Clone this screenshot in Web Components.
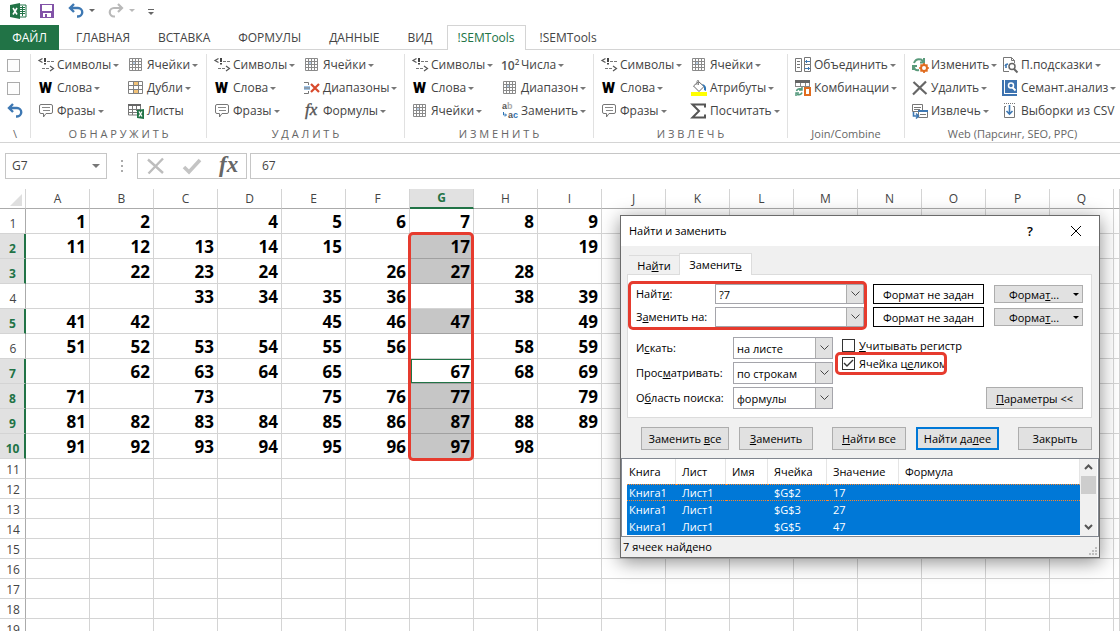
<!DOCTYPE html>
<html lang="ru">
<head>
<meta charset="utf-8">
<title>Книга1 - Excel</title>
<style>
  body {
    margin: 0;
    height: 100vh;
    overflow: hidden;
    background: #fff;
    color: #444;
    font: 12px/16px "Open Sans", "Noto Sans", sans-serif;
  }
</style>
</head>
<body>
<excel-app></excel-app>

<script>
const ICONS = {
  excel: `<path d="M9 2h7v12H9z" fill="#fff" stroke="#217346"/><path d="M10 4.500h5M10 6.500h5M10 8.500h5M10 10.500h5M12.500 3v10" stroke="#217346"/><path d="M0 2 10 0v16L0 14z" fill="#217346"/><path d="m3 5 4 6.500M7 5l-4 6.500" stroke="#fff" stroke-width="1.600"/>`,
  save: `<path d="M1 1h14v14H1z" fill="#8253a8"/><path d="M3 2h10v6H3z" fill="#fff"/><path d="M4 10h8v4H4z" fill="#fff"/><path d="M6 11h2v3H6z" fill="#8253a8"/>`,
  undo: `<path d="M6 1 2 5l4 4M2.500 5H10a4 4 0 0 1 0 8.500H9" stroke="#3e78b3" stroke-width="2.400"/>`,
  redo: `<path d="m10 1 4 4-4 4M13.500 5H6a4 4 0 0 0 0 8.500h1" stroke="#b9b9b9" stroke-width="2.200"/>`,
  more: `<path d="M0 6h6v1H0z" fill="#666"/><path d="M0 9h6l-3 3z" fill="#666"/>`,
  symbols: `<path d="M4.500 1.500 1 3.500l3.500 2" stroke="#555" stroke-width="1.200"/><path d="M6 1h2v4H6zM6 6h2v1.500H6z" fill="#444"/><path d="M9 4.500h3M13 4.500h3M4 11.500h3M8 11.500h3" stroke="#777"/><path d="m12 9 3.500 2.500L12 14" stroke="#555" stroke-width="1.200"/>`,
  words: `<text x="1" y="13" fill="#000" font-size="15" font-weight="900" font-family="Roboto">W</text>`,
  phrases: `<path d="M3 1.500h10q1.500 0 1.500 1.500v6q0 1.500-1.500 1.500H8L5.500 14v-3.500H3Q1.500 10.500 1.500 9V3Q1.500 1.500 3 1.500z" stroke="#777"/><path d="M4 4.500h8M5 7.500h7" stroke="#888"/>`,
  cells: `<path d="M4 4h4v4H4z" fill="#b9d1ea"/><path d="M1.500 1.500h12v12h-12zM4.500 1v13M7.500 1v13M10.500 1v13M1 4.500h13M1 7.500h13M1 10.500h13" stroke="#8a8a8a"/>`,
  duplicates: `<path d="M5 2h5v3H5zM5 10h5v3H5z" fill="#f2c277"/><path d="M.5 1.500h14v12H.5zM5.500 1v13M10.500 1v13M0 5.500h15M0 9.500h15" stroke="#808080"/>`,
  sheets: `<path d="M0 1h13v2H0z" fill="#666"/><path d="M.5 3v9H9M4.500 3v9M8.500 3v5M12.500 3v3M0 6.500h13M0 9.500h9" stroke="#777"/><path d="m9 7 7-1v10l-7-1z" fill="#217346"/><path d="m11 8.500 3 5M14 8.500l-3 5" stroke="#fff" stroke-width="1.300"/>`,
  ranges: `<path d="M0 6h6v4H0z" fill="#9fc3e6"/><path d="M0 2.500h4.500V5M0 13.500h4.500V11M0 8h6" stroke="#777"/><path d="m7 4 8 8M15 4l-8 8" stroke="#d8492b" stroke-width="2.200"/>`,
  formulas: `<text x="1" y="12" fill="#555" stroke="#555" stroke-width=".4" font-size="17" font-style="italic" font-family="Liberation Serif">fx</text>`,
  power: `<text x="-1" y="13" fill="#555" font-size="12" font-weight="600" font-family="Open Sans">10<tspan dy="-5" font-size="8">2</tspan></text>`,
  replace: `<g font-size="9" font-weight="700" font-family="Liberation Sans"><text x="0" y="6" fill="#555">a<tspan fill="#aaa">b</tspan></text><text x="6" y="15" fill="#555">a<tspan fill="#2e75b6">c</tspan></text></g><path d="M1.500 9v3H4M3 10.500 4.500 12 3 13.500" stroke="#2e75b6"/>`,
  attributes: `<path d="m2.500 6 5-4.500L13 6.500 8 11.500z" fill="#fff" stroke="#666"/><path d="M6 5V1.500Q6 0 7.500.5V5" stroke="#888"/><path d="M11 4q5 1 4 7l-2-1V7z" fill="#2e75b6"/><path d="M0 12h16v4H0z" fill="#ff0"/>`,
  sum: `<path d="M14 4.500V1.500H1.500L8 8l-6.500 6.500H14v-3" stroke="#555" stroke-width="2"/>`,
  join: `<path d="M.5 1.500h6v13h-6zM2 4.500h3M2 7.500h3M2 10.500h3" stroke="#777"/><path d="M9.500.5h6v7h-6zM9.500 7.500h6v7h-6z" stroke="#777"/><path d="M10 4.500h5M12 3l-1.500 1.500L12 6M15 11.500h-5M13 10l1.500 1.500L13 13" stroke="#3e78b3"/>`,
  combine: `<path d="M0 0h15v3H0z" fill="#666"/><path d="M.5 3v4M5.500 3v4M10.500 3v4M14.500 3v4M0 6.500h15" stroke="#888"/><path d="M1.500 11q1-3 5-2M7 7v3H4M7 12.500q-1 3-5 2M1 16v-3h3" stroke="#55997d" stroke-width="1.500"/><path d="M10 8h5v7h-5z" fill="#fff" stroke="#e06c1f" stroke-width="2"/>`,
  webedit: `<path d="M2 6Q4 1 9 2.500L12 5M12 1v4.500H8M1 13V9h4M2 9q0 5 5 4" stroke="#5a9a7b" stroke-width="2"/><circle cx="12" cy="11" r="3" fill="#fff" stroke="#e06c1f" stroke-width="2"/><path d="M12 6v2M12 14v2M7 11h2M15 11h2M8.500 7.500l1.500 1.500M14 13l1.500 1.500M15.500 7.500 14 9M10 13l-1.500 1.500" stroke="#e06c1f" stroke-width="1.700"/>`,
  webdelete: `<path d="M1.500 2 14.500 14M14 1.500 1 14.500" stroke="#666" stroke-width="2.200"/>`,
  webextract: `<path d="M.5 1.500h10v7H.5zM2 4.500h7M2 6.500h6" fill="#fff" stroke="#777"/><path d="M6.500 7.500h9v7h-9z" fill="#fff" stroke="#777"/><path d="M6 8h10" stroke="#3e78b3" stroke-width="2"/><path d="M8 11.500h6" stroke="#777"/><path d="M1.500 9v4H6M4 10.500 6.500 13 4 15.500" stroke="#3e78b3" stroke-width="1.600"/>`,
  hints: `<path d="M7 14.500H1.500V.5h8l3 3V6M9.500.5v3h3" stroke="#777"/><path d="M4 7v4M3 9q1-2 3-2" stroke="#3e78b3" stroke-width="1.600"/><circle cx="10" cy="9.500" r="3" fill="#fff" stroke="#666" stroke-width="1.500"/><path d="m12 12 3.500 3.500" stroke="#666" stroke-width="2"/>`,
  analysis: `<path d="M0 0h15v16H0z" fill="#3d73b0"/><path d="M2.500 0v13" stroke="#fff"/><circle cx="9" cy="5.500" r="2.500" stroke="#fff" stroke-width="1.500"/><path d="m10.500 7.500 3 3" stroke="#fff" stroke-width="1.800"/><path d="M2 13.500h13" stroke="#fff"/>`,
  csv: `<path d="M2 .5h11" stroke="#777" stroke-dasharray="1 1"/><path d="M4 3.500H2.500v11h10v-11H11" stroke="#777"/><path d="M7.500 2v9M4.500 8l3 3 3-3" stroke="#3e78b3" stroke-width="1.600"/>`,
  cancel: `<path d="M0 1.500 15 15M15 .5.500 15.500" stroke="#bdbdbd" stroke-width="2.400"/>`,
  accept: `<path d="m0 9 5 5L16 2" stroke="#c4c4c4" stroke-width="3.600"/>`,
  fx: `<text x="-1" y="14" fill="#666" font-size="23" font-weight="700" font-style="italic" font-family="Liberation Serif">fx</text>`,
  close: `<path d="m3 3 10 10M13 3 3 13" stroke="#000"/>`
};

class XlIcon extends HTMLElement {
  constructor() {
    super();
    this.attachShadow({ mode: "open" });
  }

  connectedCallback() {
    this.shadowRoot.innerHTML = `
      <style>
        :host { display: block; width: 16px; height: 16px; flex: none; }
        svg { display: block; overflow: visible; }
      </style>
      <svg width="16" height="16" viewBox="0 0 16 16" fill="none" aria-hidden="true">${ICONS[this.getAttribute("name")]}</svg>
    `;
  }
}

class XlCommand extends HTMLElement {
  constructor() {
    super();
    this.attachShadow({ mode: "open" });
  }

  connectedCallback() {
    const arrow = this.hasAttribute("plain") ? "" : "<i></i>";
    this.shadowRoot.innerHTML = `
      <style>
        :host { display: flex; }
        button {
          display: flex;
          align-items: center;
          gap: 2px;
          padding: 0;
          border: 0;
          background: none;
          color: inherit;
          font: inherit;
          white-space: nowrap;
        }
        span { padding-left: 1px; }
        i {
          border: 3px solid transparent;
          border-top-color: #777;
          border-bottom: 0;
        }
      </style>
      <button type="button"><xl-icon name="${this.getAttribute("icon")}"></xl-icon><span><slot></slot></span>${arrow}</button>
    `;
  }
}

class XlGroup extends HTMLElement {
  constructor() {
    super();
    this.attachShadow({ mode: "open" });
    this.shadowRoot.innerHTML = `
      <style>
        :host {
          display: flex;
          flex-direction: column;
          flex: none;
          box-sizing: border-box;
          padding: 1px 0 0 7px;
          border-right: 1px solid #e1e1e1;
        }
        :host(:last-child) { flex: 1; border-right: 0; }
        .items {
          display: grid;
          grid-auto-flow: column;
          grid-template-rows: repeat(3, 20px);
          grid-auto-columns: 90px;
          row-gap: 3px;
          align-items: center;
        }
        .caption {
          margin-top: 5px;
          padding-right: 7px;
          color: #666;
          font-size: 11px;
          text-align: center;
          white-space: nowrap;
        }
      </style>
      <div class="items"><slot></slot></div>
      <div class="caption"><slot name="caption"></slot></div>
    `;
  }
}

class XlRibbon extends HTMLElement {
  constructor() {
    super();
    this.attachShadow({ mode: "open" });

    this.tabs = ["ГЛАВНАЯ", "ВСТАВКА", "ФОРМУЛЫ", "ДАННЫЕ", "ВИД", "!SEMTools", "!SEMTools"];
    // [caption, width, commands]; a command is [icon, label, plain]
    this.groups = [
      ["О Б Н А Р У Ж И Т Ь", 176, [["symbols", "Символы"], ["words", "Слова"], ["phrases", "Фразы"], ["cells", "Ячейки"], ["duplicates", "Дубли"], ["sheets", "Листы", true]]],
      ["У Д А Л И Т Ь", 198, [["symbols", "Символы"], ["words", "Слова"], ["phrases", "Фразы"], ["cells", "Ячейки"], ["ranges", "Диапазоны"], ["formulas", "Формулы"]]],
      ["И З М Е Н И Т Ь", 189, [["symbols", "Символы"], ["words", "Слова"], ["cells", "Ячейки"], ["power", "Числа"], ["cells", "Диапазон"], ["replace", "Заменить"]]],
      ["И З В Л Е Ч Ь", 194, [["symbols", "Символы"], ["words", "Слова"], ["phrases", "Фразы"], ["cells", "Ячейки"], ["attributes", "Атрибуты"], ["sum", "Посчитать"]]],
      ["Join/Combine", 117, [["join", "Объединить"], ["combine", "Комбинации"]]],
      ["Web (Парсинг, SEO, PPC)", 215, [["webedit", "Изменить"], ["webdelete", "Удалить"], ["webextract", "Извлечь"], ["hints", "П.подсказки"], ["analysis", "Семант.анализ"], ["csv", "Выборки из CSV", true]]]
    ];

    this.shadowRoot.innerHTML = `
      <style>
        :host { display: block; }
        button { padding: 0; border: 0; background: none; color: inherit; font: inherit; white-space: nowrap; }
        .quick { display: flex; align-items: center; height: 21px; padding: 0 10px; }
        .quick button { display: flex; align-items: center; gap: 5px; margin-right: 13px; }
        .quick i { border: 3px solid transparent; border-top-color: #666; border-bottom: 0; }
        .quick .off i { border-top-color: #b9b9b9; }
        nav { display: flex; height: 25px; margin-top: 4px; border-bottom: 1px solid #d4d4d4; box-sizing: border-box; }
        nav button { height: 25px; padding: 0 14px; }
        nav .file { width: 59px; margin-right: 3px; padding: 0; background: #217346; color: #fff; }
        nav .active { padding: 0 10px; border: 1px solid #d4d4d4; border-bottom: 0; background: #fff; color: #217346; }
        .groups { display: flex; height: 93px; padding: 4px 0; box-sizing: border-box; overflow: hidden; border-bottom: 1px solid #d4d4d4; }
        input { appearance: none; width: 13px; height: 13px; margin: 0; border: 1px solid #ababab; background: #fdfdfd; }
      </style>
      <div class="quick">
        <button type="button" aria-label="Excel"><xl-icon name="excel"></xl-icon></button>
        <button type="button" aria-label="Сохранить"><xl-icon name="save"></xl-icon></button>
        <button type="button" aria-label="Отменить"><xl-icon name="undo"></xl-icon><i></i></button>
        <button type="button" aria-label="Вернуть" class="off"><xl-icon name="redo"></xl-icon><i></i></button>
        <button type="button" aria-label="Настройка панели"><xl-icon name="more"></xl-icon></button>
      </div>
      <nav>
        <button type="button" class="file">ФАЙЛ</button>
        ${this.tabs.map((tab, i) => `<button type="button" class="${i === 5 ? "active" : ""}">${tab}</button>`).join("")}
      </nav>
      <div class="groups">
        <xl-group style="width: 31px">
          <input type="checkbox" aria-label="Параметр 1">
          <input type="checkbox" aria-label="Параметр 2">
          <xl-command icon="undo" plain></xl-command>
          <span slot="caption">\\</span>
        </xl-group>
        ${this.groups.map((group) => this.renderGroup(group)).join("")}
      </div>
    `;
  }

  renderGroup([caption, width, commands]) {
    const items = commands.map(([icon, label, plain]) =>
      `<xl-command icon="${icon}" ${plain ? "plain" : ""}>${label}</xl-command>`).join("");
    return `<xl-group style="width: ${width}px">${items}<span slot="caption">${caption}</span></xl-group>`;
  }
}

class XlFormulaBar extends HTMLElement {
  constructor() {
    super();
    this.attachShadow({ mode: "open" });
    this.shadowRoot.innerHTML = `
      <style>
        :host { display: flex; height: 26px; padding: 10px 0 10px 5px; }
        .name, .tools { display: flex; box-sizing: border-box; border: 1px solid #c6c6c6; }
        .name { width: 102px; }
        input { min-width: 0; border: 0; padding: 0 6px; background: #fff; color: #444; font: inherit; outline: 0; }
        .name input { flex: 1; }
        button { display: flex; align-items: center; justify-content: center; border: 0; padding: 0; background: none; }
        .name button { width: 20px; }
        .name i { border: 4px solid transparent; border-top-color: #777; border-bottom: 0; }
        .grip { display: flex; flex-direction: column; justify-content: center; gap: 3px; width: 30px; align-items: center; }
        .grip b { width: 2px; height: 2px; background: #ababab; }
        .tools { width: 110px; margin-right: 3px; }
        .tools button { flex: 1; }
        .value { flex: 1; box-sizing: border-box; border: 1px solid #c6c6c6; border-right: 0; padding: 0 11px; }
      </style>
      <div class="name">
        <input aria-label="Имя" value="G7">
        <button type="button" aria-label="Список имён"><i></i></button>
      </div>
      <div class="grip"><b></b><b></b><b></b></div>
      <div class="tools">
        <button type="button" aria-label="Отмена"><xl-icon name="cancel"></xl-icon></button>
        <button type="button" aria-label="Ввод"><xl-icon name="accept"></xl-icon></button>
        <button type="button" aria-label="Вставить функцию"><xl-icon name="fx"></xl-icon></button>
      </div>
      <input class="value" aria-label="Строка формул" value="67">
    `;
  }
}

class XlSheet extends HTMLElement {
  constructor() {
    super();
    this.attachShadow({ mode: "open" });

    this.selected = [2, 3, 5, 7, 8, 9, 10];
    this.active = 7;
    // one string per row, a dot for an empty cell
    this.rows = [
      "1 2 . 4 5 6 7 8 9",
      "11 12 13 14 15 . 17 . 19",
      ". 22 23 24 . 26 27 28 .",
      ". . 33 34 35 36 . 38 39",
      "41 42 . . 45 46 47 . 49",
      "51 52 53 54 55 56 . 58 59",
      ". 62 63 64 65 . 67 68 69",
      "71 . 73 . 75 76 77 . 79",
      "81 82 83 84 85 86 87 88 89",
      "91 92 93 94 95 96 97 98 ."
    ].map((row) => row.split(" "));

    this.shadowRoot.innerHTML = `
      <style>
        :host { display: block; position: relative; flex: 1; min-height: 0; overflow: hidden; }
        table { width: 100%; table-layout: fixed; border-collapse: separate; border-spacing: 0; }
        col { width: 64px; }
        col:first-child { width: 26px; }
        col:last-child { width: auto; }
        th, td { box-sizing: border-box; padding: 0; border: 0 solid #d4d4d4; border-width: 0 1px 1px 0; overflow: hidden; }
        th { font-weight: 400; }
        thead th { height: 20px; border-bottom-color: #ababab; }
        thead i { display: block; margin: 2px 3px 0 auto; width: 0; border: 6px solid; border-color: transparent #dfdfdf #dfdfdf transparent; }
        tbody th { height: 20px; border-right-color: #ababab; line-height: 15px; vertical-align: bottom; padding: 0 0 1px 1px; }
        .data th, .data td { height: 25px; }
        .data th { padding-bottom: 2px; }
        td { padding-right: 3px; color: #000; font-size: 17px; font-weight: 700; line-height: 23px; text-align: right; }
        tr:not(.data) td { line-height: 15px; }
        th.on { background: #e1e1e1; color: #217346; font-weight: 700; }
        thead th.on { border-bottom: 2px solid #217346; }
        tbody th.on { border-right: 2px solid #217346; }
        td.on { background: #c6c6c6; border-bottom-color: #a0a0a0; }
        td.active { background: #fff; box-shadow: inset 1px 0 #fff, inset 2px 1px #217346, inset 0 -1px #217346; }
        red-frame { top: 43px; left: 408px; width: 60px; height: 223px; }
      </style>
      <table></table>
      <red-frame></red-frame>
    `;
    window.addEventListener("resize", () => this.render());
    this.render();
  }

  // as many columns and rows as the window shows, the last column takes the rest
  render() {
    const columns = "ABCDEFGHIJKLMNOPQRSTUVWXYZ".slice(0, Math.floor((window.innerWidth - 26) / 64)).split("");
    const count = Math.max(10, 10 + Math.ceil((window.innerHeight - 459) / 20));
    let html = `<colgroup><col>${"<col>".repeat(columns.length)}<col></colgroup><thead><tr><th><i></i></th>`;
    html += columns.map((name) => `<th class="${name === "G" ? "on" : ""}">${name}</th>`).join("");
    html += "<th></th></tr></thead><tbody>";
    for (let n = 1; n <= count; n++) {
      const on = this.selected.includes(n);
      const row = this.rows[n - 1] || [];
      html += `<tr class="${n <= 10 ? "data" : ""}"><th class="${on ? "on" : ""}">${n}</th>`;
      columns.forEach((name, i) => {
        const value = row[i] && row[i] !== "." ? row[i] : "";
        const state = on && name === "G" ? (n === this.active ? "on active" : "on") : "";
        html += `<td class="${state}">${value}</td>`;
      });
      html += "<td></td></tr>";
    }
    this.shadowRoot.querySelector("table").innerHTML = html + "</tbody>";
  }
}

class RedFrame extends HTMLElement {
  constructor() {
    super();
    this.attachShadow({ mode: "open" });
    this.shadowRoot.innerHTML = `
      <style>
        :host { display: block; position: absolute; border: 3px solid #e63b2e; border-radius: 5px; pointer-events: none; }
      </style>
    `;
  }
}

class FindDialog extends HTMLElement {
  constructor() {
    super();
    this.attachShadow({ mode: "open" });

    this.results = [["Книга1", "Лист1", "", "$G$2", "17", ""], ["Книга1", "Лист1", "", "$G$3", "27", ""], ["Книга1", "Лист1", "", "$G$5", "47", ""]];

    this.shadowRoot.innerHTML = `
      <style>
        :host {
          display: block;
          position: absolute;
          left: 620px;
          top: 215px;
          width: 478px;
          border: 1px solid #6b6b6b;
          background: #f0f0f0;
          box-shadow: 0 4px 18px rgba(0, 0, 0, .45);
          color: #000;
          font-size: 11px;
          line-height: 15px;
        }
        button, input, select { box-sizing: border-box; margin: 0; color: inherit; font: inherit; outline: 0; }
        button { flex: none; padding: 0; border: 1px solid #adadad; background: #e1e1e1; white-space: nowrap; }
        svg { display: block; }
        header { display: flex; align-items: center; height: 30px; padding-left: 8px; background: #fff; }
        header span { flex: 1; padding-bottom: 2px; }
        header button { display: flex; justify-content: center; width: 46px; border: 0; background: none; font-size: 13px; font-weight: 600; }
        .tabs { display: flex; align-items: flex-end; height: 29px; padding-left: 8px; }
        .tabs button { height: 20px; width: 50px; border: 1px solid #dcdcdc; border-width: 1px 0 0; background: none; }
        .tabs .current { position: relative; z-index: 1; height: 22px; width: 73px; border-width: 1px 1px 0; background: #fff; }
        .panel { margin: -1px 7px 0 6px; padding: 9px 8px 8px; border: 1px solid #dcdcdc; background: #fff; }
        .top { display: flex; gap: 9px; }
        .fields, .samples, .formats { display: grid; grid-template-rows: 20px 20px; gap: 3px; }
        .fields { position: relative; flex: 1; min-width: 0; grid-template-columns: 79px minmax(0, 1fr); gap: 3px 0; align-items: center; }
        .fields label, .options label { padding-bottom: 2px; }
        .fields red-frame { inset: -3px -3px -3px -8px; }
        .combo { display: flex; height: 20px; border: 1px solid #a5a5ab; box-sizing: border-box; }
        .combo input { flex: 1; min-width: 0; padding: 0 3px; border: 0; }
        .combo button, .pick i { display: flex; align-items: center; justify-content: center; width: 17px; border-color: #adadad; border-width: 0 0 0 1px; }
        .samples { flex: none; width: 111px; }
        .samples output { display: flex; align-items: center; justify-content: center; border: 1px solid #000; }
        .formats { flex: none; width: 89px; align-items: center; margin-left: 1px; }
        .formats button { display: flex; align-items: center; height: 18px; padding-right: 3px; }
        .formats span { flex: 1; }
        .formats i { border: 3px solid transparent; border-top-color: #000; border-bottom: 0; }
        .bottom { display: flex; gap: 9px; margin-top: 10px; }
        .options { display: grid; grid-template-columns: 97px 100px; grid-auto-rows: 22px; gap: 3px 0; align-items: center; }
        .pick { position: relative; }
        .pick select { display: block; appearance: none; width: 100%; height: 22px; padding: 0 3px; border: 1px solid #a5a5ab; border-radius: 0; background: #fff; }
        .pick i { position: absolute; top: 1px; right: 1px; bottom: 1px; background: #e1e1e1; border-style: solid; pointer-events: none; box-sizing: border-box; }
        .checks { flex: 1; }
        .checks label { display: flex; align-items: center; position: relative; height: 19px; gap: 4px; white-space: nowrap; }
        .checks label:first-child { height: 17px; }
        .checks input { appearance: none; width: 13px; height: 13px; border: 1px solid #333; background: #fff; }
        .checks input:checked { background: #fff url("data:image/svg+xml,%3Csvg xmlns='http://www.w3.org/2000/svg' viewBox='0 0 11 11'%3E%3Cpath d='m1 5 3 3 6-6' fill='none' stroke='%23333' stroke-width='1.400'/%3E%3C/svg%3E"); }
        .checks red-frame { top: -2px; left: -7px; width: 106px; height: 17px; }
        .params { align-self: flex-end; width: 97px; height: 22px; margin-left: -80px; }
        .actions { display: flex; gap: 10px; padding: 9px 6px 8px 20px; }
        .actions button { width: 74px; height: 23px; }
        .actions .wide { width: 88px; }
        .actions .main { width: 83px; border: 2px solid #0078d7; }
        .actions .gap { margin-left: 9px; }
        .list { display: flex; height: 77px; border: 1px solid #828790; padding: 0 1px 0 5px; background: #fff; overflow: hidden; }
        table { flex: 1; border-collapse: separate; border-spacing: 0; table-layout: fixed; width: 0; height: 76px; }
        th { height: 25px; box-sizing: border-box; font-weight: 400; text-align: left; padding: 0 0 0 6px; border-right: 1px solid #e5e5e5; }
        td { height: 17px; box-sizing: border-box; padding: 0 0 0 6px; }
        th:first-child, td:first-child { padding-left: 2px; }
        tbody { background: #0078d7; color: #fff; }
        tbody tr:first-child td { border: 0 dotted #ff8728; border-width: 1px 0; }
        .scroll { display: flex; flex-direction: column; align-items: center; width: 17px; background: #f0f0f0; }
        .scroll b { width: 15px; height: 18px; background: #cdcdcd; }
        .scroll svg { height: 17px; }
        .scroll svg:last-child { margin-top: auto; height: 19px; }
        footer { display: flex; justify-content: space-between; height: 20px; padding-left: 2px; line-height: 20px; }
        footer svg { align-self: flex-end; margin: 0 2px 2px 0; }
      </style>
      <header>
        <span>Найти и заменить</span>
        <button type="button" aria-label="Справка">?</button>
        <button type="button" aria-label="Закрыть окно"><xl-icon name="close"></xl-icon></button>
      </header>
      <div class="tabs" role="tablist">
        <button type="button" role="tab">На<u>й</u>ти</button>
        <button type="button" role="tab" class="current" aria-selected="true">Заменит<u>ь</u></button>
      </div>
      <div class="panel">
        <div class="top">
          <div class="fields">
            <label for="find">Найт<u>и</u>:</label>
            <div class="combo"><input id="find" value="?7"><button type="button" aria-label="Открыть список">${this.chevron()}</button></div>
            <label for="with">З<u>а</u>менить на:</label>
            <div class="combo"><input id="with"><button type="button" aria-label="Открыть список">${this.chevron()}</button></div>
            <red-frame></red-frame>
          </div>
          <div class="samples"><output>Формат не задан</output><output>Формат не задан</output></div>
          <div class="formats">
            <button type="button"><span>Форма<u>т</u>...</span><i></i></button>
            <button type="button"><span>Форма<u>т</u>...</span><i></i></button>
          </div>
        </div>
        <div class="bottom">
          <div class="options">
            <label for="scope">И<u>с</u>кать:</label>
            <div class="pick"><select id="scope"><option>на листе</option><option>в книге</option></select><i>${this.chevron()}</i></div>
            <label for="order">Прос<u>м</u>атривать:</label>
            <div class="pick"><select id="order"><option>по строкам</option><option>по столбцам</option></select><i>${this.chevron()}</i></div>
            <label for="area">О<u>б</u>ласть поиска:</label>
            <div class="pick"><select id="area"><option>формулы</option></select><i>${this.chevron()}</i></div>
          </div>
          <div class="checks">
            <label><input type="checkbox"><span><u>У</u>читывать регистр</span></label>
            <label><input type="checkbox" checked><span>Ячейка ц<u>е</u>ликом</span><red-frame></red-frame></label>
          </div>
          <button type="button" class="params"><u>П</u>араметры &lt;&lt;</button>
        </div>
      </div>
      <div class="actions">
        <button type="button" class="wide">Заменить <u>в</u>се</button>
        <button type="button"><u>З</u>аменить</button>
        <button type="button" class="gap"><u>Н</u>айти все</button>
        <button type="button" class="main">Найти да<u>л</u>ее</button>
        <button type="button" class="gap">Закрыть</button>
      </div>
      <div class="list">
        <table>
          <colgroup><col style="width: 49px"><col style="width: 50px"><col style="width: 42px"><col style="width: 59px"><col style="width: 72px"><col></colgroup>
          <thead><tr><th>Книга</th><th>Лист</th><th>Имя</th><th>Ячейка</th><th>Значение</th><th>Формула</th></tr></thead>
          <tbody></tbody>
        </table>
        <div class="scroll">
          <svg width="9" viewBox="0 0 9 9" fill="none"><path d="m1 6 3.500-3.500L8 6" stroke="#555" stroke-width="2"/></svg>
          <b></b>
          <svg width="9" viewBox="0 0 9 9" fill="none"><path d="m1 3 3.500 3.500L8 3" stroke="#555" stroke-width="2"/></svg>
        </div>
      </div>
      <footer>
        <span>7 ячеек найдено</span>
        <svg width="8" height="8" fill="#bfbfbf"><path d="M6 0h2v2H6zM3 3h2v2H3zM6 3h2v2H6zM0 6h2v2H0zM3 6h2v2H3zM6 6h2v2H6z"/></svg>
      </footer>
    `;
    this.renderResults();
  }

  chevron() {
    return `<svg width="9" height="6" fill="none"><path d="M.5.500 4.500 4.500l4-4" stroke="#444"/></svg>`;
  }

  renderResults() {
    this.shadowRoot.querySelector("tbody").innerHTML = this.results
      .map((row) => `<tr>${row.map((cell) => `<td>${cell}</td>`).join("")}</tr>`)
      .join("");
  }
}

class ExcelApp extends HTMLElement {
  constructor() {
    super();
    this.attachShadow({ mode: "open" });
    this.shadowRoot.innerHTML = `
      <style>
        :host { display: flex; flex-direction: column; position: relative; height: 100vh; overflow: hidden; }
      </style>
      <xl-ribbon></xl-ribbon>
      <xl-formula-bar></xl-formula-bar>
      <xl-sheet></xl-sheet>
      <find-dialog></find-dialog>
    `;
  }
}

customElements.define("xl-icon", XlIcon);
customElements.define("xl-command", XlCommand);
customElements.define("xl-group", XlGroup);
customElements.define("xl-ribbon", XlRibbon);
customElements.define("xl-formula-bar", XlFormulaBar);
customElements.define("red-frame", RedFrame);
customElements.define("xl-sheet", XlSheet);
customElements.define("find-dialog", FindDialog);
customElements.define("excel-app", ExcelApp);
</script>
</body>
</html>
